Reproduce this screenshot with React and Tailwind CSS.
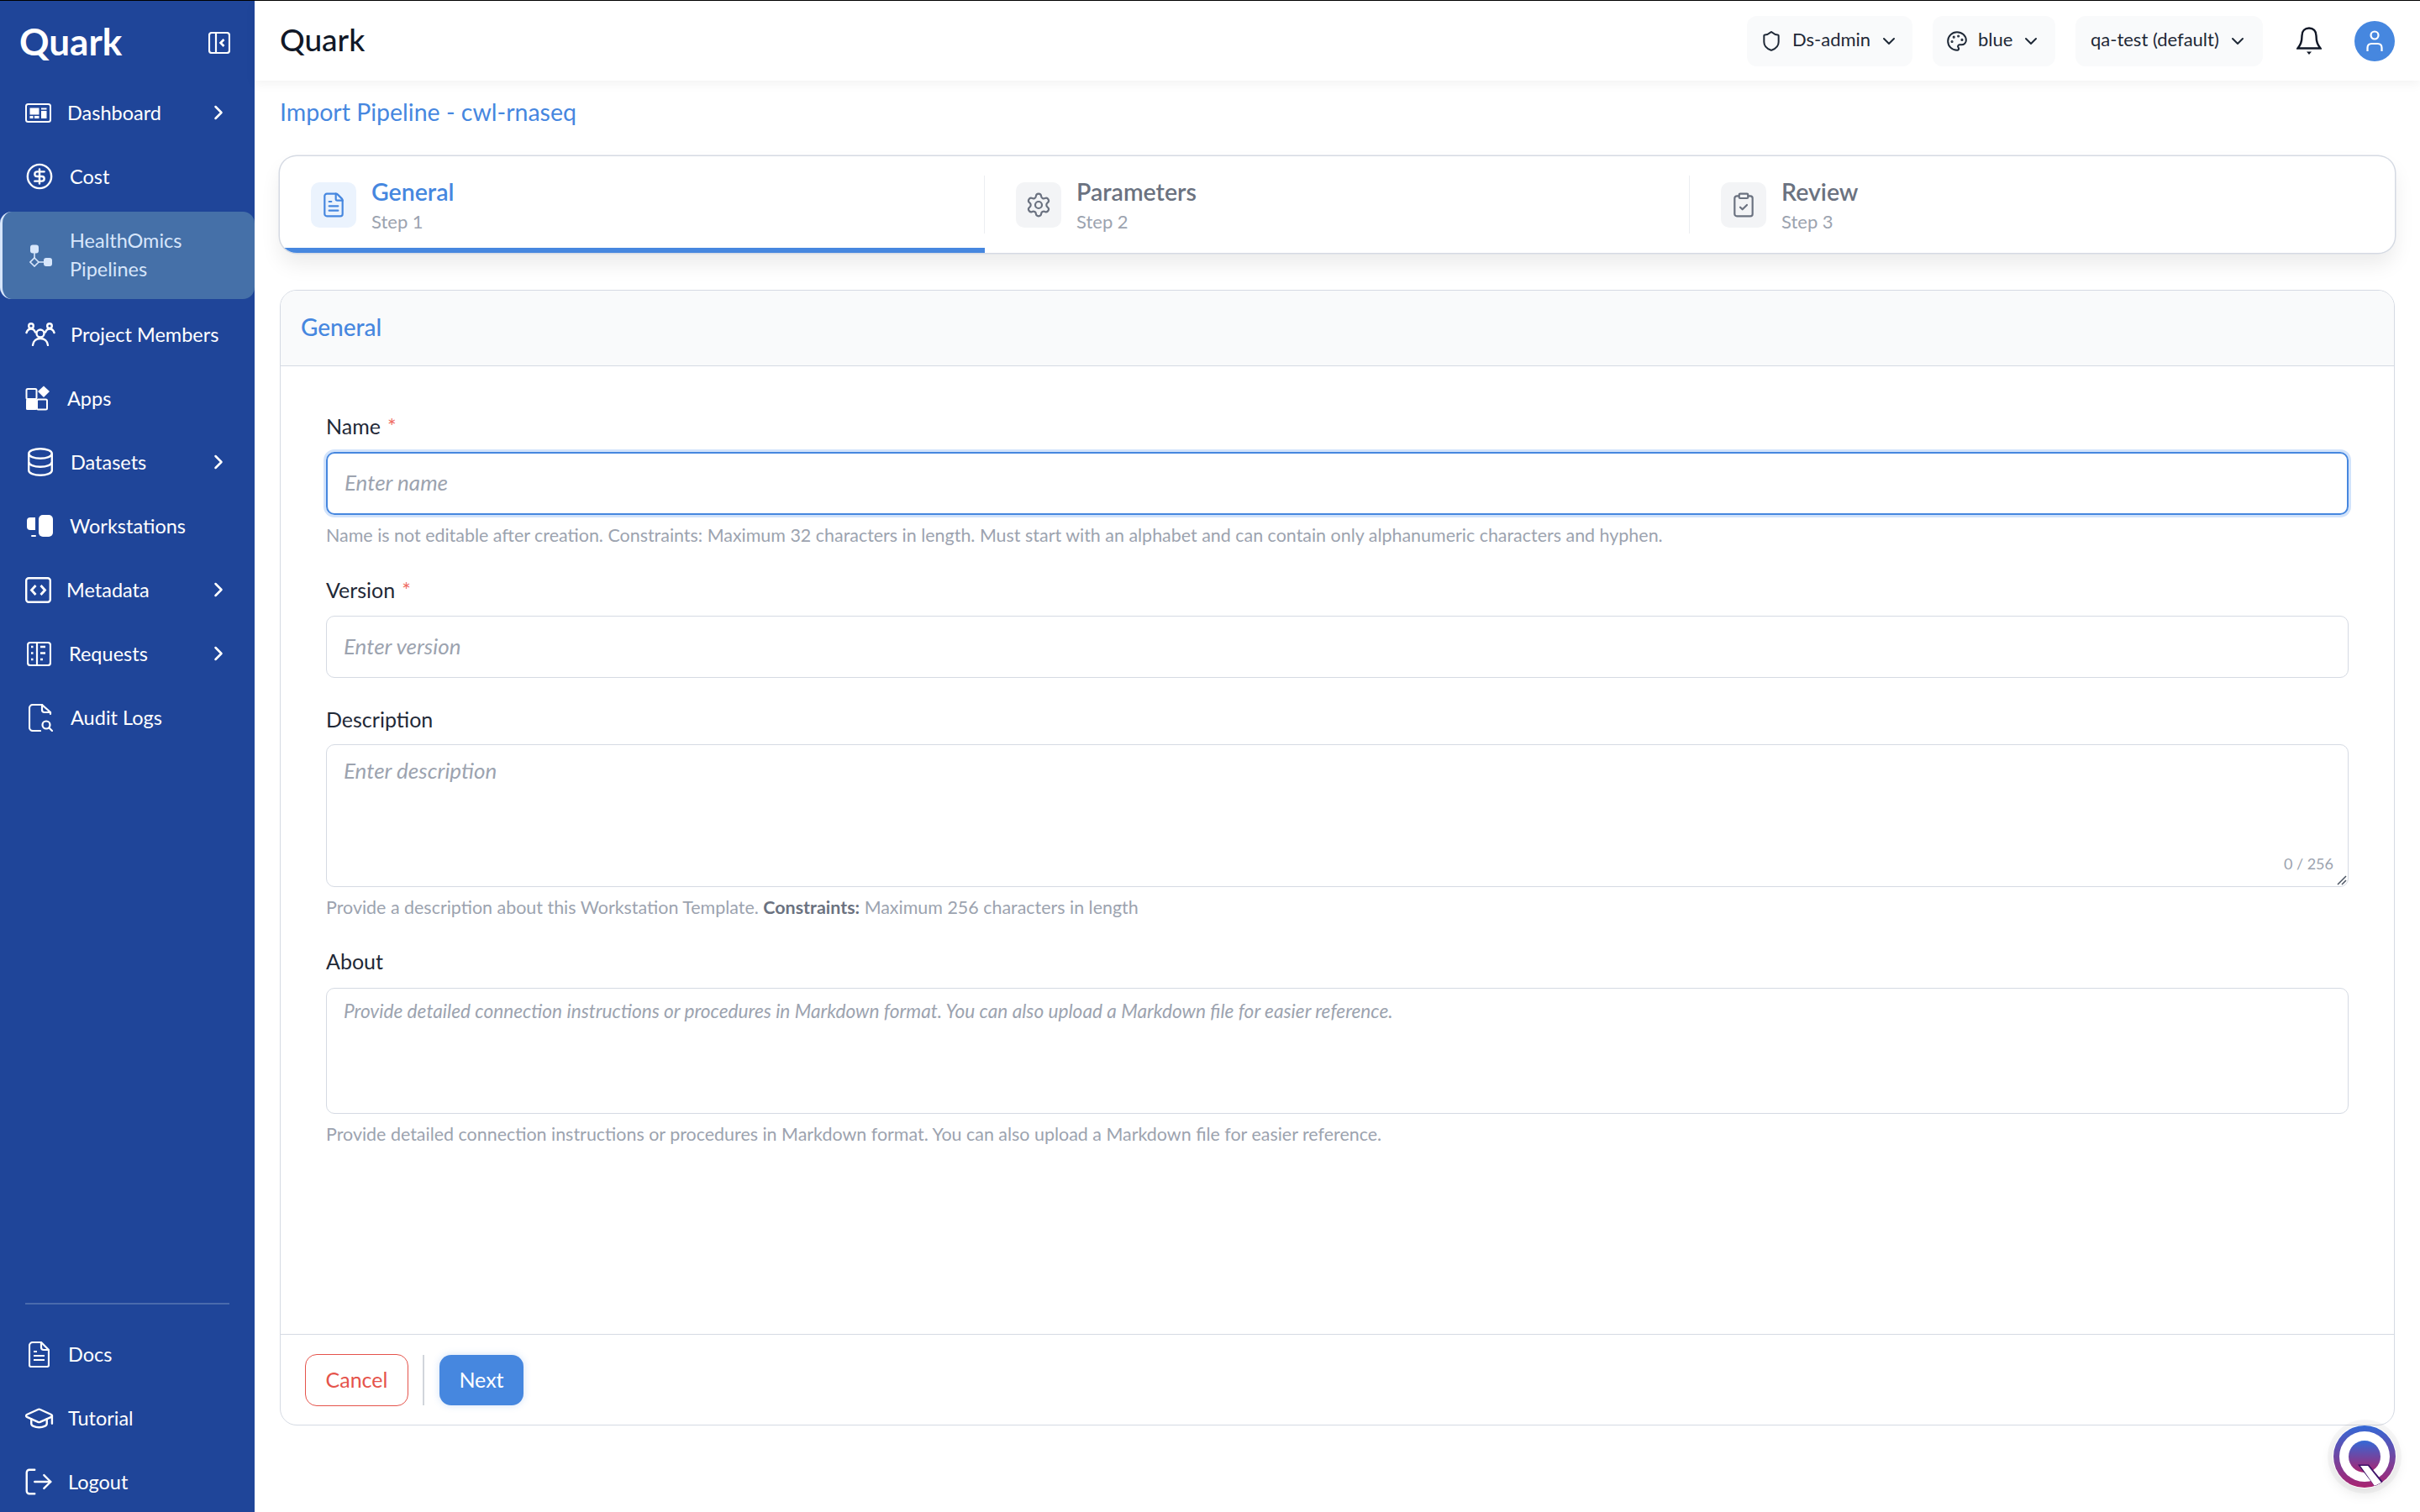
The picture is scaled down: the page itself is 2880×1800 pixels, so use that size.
import {
  ChevronDown,
  ChevronRight,
  CircleDollarSign,
  ClipboardCheck,
  FileText,
  GraduationCap,
  LogOut,
  Palette,
  Settings,
  Shield,
} from "lucide-react";

const DashboardIcon = () => (
  <svg width="31" height="23" viewBox="0 0 31 23" fill="none">
    <rect x="1" y="1" width="29" height="21" rx="2.5" stroke="currentColor" strokeWidth="2" />
    <rect x="5.5" y="5.5" width="11" height="8" fill="currentColor" />
    <rect x="5.5" y="15" width="4" height="3" fill="currentColor" />
    <rect x="11" y="15" width="5.5" height="3" fill="currentColor" />
    <rect x="19" y="5.5" width="6.5" height="2" fill="currentColor" />
    <rect x="19" y="9" width="6.5" height="9" fill="currentColor" />
  </svg>
);

const PipelineIcon = () => (
  <svg width="27" height="27" viewBox="0 0 27 27" fill="none" stroke="currentColor" strokeWidth="1.6">
    <rect x="1" y="0.5" width="10" height="10" rx="3" fill="currentColor" stroke="none" />
    <rect x="17" y="16" width="10" height="10" rx="3" fill="currentColor" stroke="none" />
    <path d="M6 10v6M11 21h6" />
    <path d="M6 16l5 5-5 5-5-5z" />
  </svg>
);

const MembersIcon = () => (
  <svg width="36" height="28" viewBox="0 0 36 28" fill="none" stroke="currentColor" strokeWidth="2.400" strokeLinecap="round">
    <circle cx="7" cy="4" r="2.800" />
    <circle cx="29" cy="4" r="2.800" />
    <circle cx="18" cy="13" r="4.500" />
    <path d="M1.500 12c1-3 3-4.500 5.500-4.500 2 0 4 1.500 5 4M34.500 12c-1-3-3-4.500-5.500-4.500-2 0-4 1.500-5 4" />
    <path d="M9 27c.5-5 4-8 9-8s8.500 3 9 8" />
  </svg>
);

const AppsIcon = () => (
  <svg width="30" height="30" viewBox="0 0 30 30" fill="none">
    <rect x="1.500" y="4" width="12" height="12" rx="1.500" stroke="currentColor" strokeWidth="2" />
    <rect x="1" y="16" width="13" height="13" rx="1.500" fill="currentColor" />
    <rect x="14" y="16.500" width="12" height="12" rx="1.500" stroke="currentColor" strokeWidth="2" />
    <path d="M22 0.500l7 6.500-7 7-7-7z" fill="currentColor" />
  </svg>
);

const DatabaseIcon = () => (
  <svg width="30" height="34" viewBox="0 0 30 34" fill="none" stroke="currentColor" strokeWidth="2.400">
    <ellipse cx="15" cy="7" rx="13.800" ry="5.800" />
    <path d="M1.200 7v20c0 3.300 6.200 5.800 13.800 5.800s13.800-2.500 13.800-5.800V7" />
    <path d="M1.200 17c0 3.300 6.200 5.800 13.800 5.800s13.800-2.500 13.800-5.800" />
  </svg>
);

const WorkstationIcon = () => (
  <svg width="32" height="26" viewBox="0 0 32 26" fill="currentColor">
    <rect x="15" y="0" width="17" height="26" rx="5" />
    <path d="M5 3h6v15H5a4 4 0 0 1-4-4V7a4 4 0 0 1 4-4z" />
    <rect x="6" y="24" width="6" height="2" rx="1" />
  </svg>
);

const MetadataIcon = () => (
  <svg width="31" height="31" viewBox="0 0 31 31" fill="none" stroke="currentColor" strokeWidth="2.800">
    <rect x="1.200" y="1.200" width="28.600" height="28.600" rx="3" strokeWidth="2.400" />
    <path d="M12.500 10l-5 5.500 5 5.500M18.500 10l5 5.500-5 5.500" />
  </svg>
);

const RequestsIcon = () => (
  <svg width="29" height="29" viewBox="0 0 29 29" fill="none" stroke="currentColor" strokeWidth="2.200">
    <rect x="1" y="1" width="27" height="27" rx="3" />
    <path d="M12 1v27" />
    <path d="M5 6h2.500M5 13.500h2.500M5 21h2.500M16 6h6M16 13.500h6M16 21h3" strokeWidth="2.400" />
  </svg>
);

const AuditIcon = () => (
  <svg width="29" height="33" viewBox="0 0 29 33" fill="none" stroke="currentColor" strokeWidth="2.200" strokeLinecap="round">
    <path d="M16 1H5a4 4 0 0 0-4 4v23a4 4 0 0 0 4 4h9" />
    <path d="M16 1l10 9v2M16 1v6a3 3 0 0 0 3 3h7" />
    <circle cx="21" cy="25" r="4.500" />
    <path d="M24.500 28.500l3.500 3.500" />
  </svg>
);

const DocsIcon = () => (
  <svg width="25" height="31" viewBox="0 0 25 31" fill="none" stroke="currentColor" strokeWidth="2.200">
    <path d="M15 1H5a4 4 0 0 0-4 4v23a2 2 0 0 0 2 2h19a2 2 0 0 0 2-2V10z" />
    <path d="M15 1v6a3 3 0 0 0 3 3h6" />
    <path d="M6 12h4M6 17h13M6 22h13" strokeWidth="2.200" />
  </svg>
);

const QuarkFab = () => (
  <svg width="76" height="76" viewBox="0 0 76 76">
    <defs>
      <linearGradient id="fabGrad" x1="0" y1="0" x2="0" y2="1">
        <stop offset="0" stopColor="#3469d6" />
        <stop offset="1" stopColor="#aa2470" />
      </linearGradient>
      <clipPath id="fabClip">
        <circle cx="38" cy="38" r="37" />
      </clipPath>
    </defs>
    <circle cx="38" cy="38" r="37" fill="url(#fabGrad)" />
    <circle cx="38" cy="38" r="30" fill="#fff" />
    <circle cx="38" cy="38" r="19" fill="url(#fabGrad)" />
    <g clipPath="url(#fabClip)">
      <path d="M30 47.500h13l18 22-10 5z" fill="#3d1068" />
      <path d="M33 49h9l16 20-8 4z" fill="#fff" />
    </g>
  </svg>
);

const navItems = [
  { label: "Dashboard", icon: <DashboardIcon />, row: "pl-[30px] gap-[19px]", arrow: true },
  {
    label: "Cost",
    icon: <CircleDollarSign size={34} absoluteStrokeWidth strokeWidth={2.400} />,
    row: "pl-[30px] gap-[19px]",
  },
  { label: "HealthOmics Pipelines", icon: <PipelineIcon />, row: "pl-[32px] gap-[21px]", active: true },
  { label: "Project Members", icon: <MembersIcon />, row: "pl-[30px] gap-[18px]" },
  { label: "Apps", icon: <AppsIcon />, row: "pl-[30px] gap-[20px]" },
  { label: "Datasets", icon: <DatabaseIcon />, row: "pl-[33px] gap-[21px]", arrow: true },
  { label: "Workstations", icon: <WorkstationIcon />, row: "pl-[31px] gap-[20px]" },
  { label: "Metadata", icon: <MetadataIcon />, row: "pl-[30px] gap-[18px]", arrow: true },
  { label: "Requests", icon: <RequestsIcon />, row: "pl-[32px] gap-[21px]", arrow: true },
  { label: "Audit Logs", icon: <AuditIcon />, row: "pl-[34px] gap-[21px]" },
];

const bottomItems = [
  { label: "Docs", icon: <DocsIcon />, row: "pl-[34px] gap-[22px]" },
  {
    label: "Tutorial",
    icon: <GraduationCap size={37} absoluteStrokeWidth strokeWidth={2.400} />,
    row: "pl-[28px] gap-[16px]",
  },
  {
    label: "Logout",
    icon: <LogOut size={38} absoluteStrokeWidth strokeWidth={2.400} />,
    row: "pl-[27px] gap-[16px]",
  },
];

function NavRow({ item }) {
  if (item.active) {
    return (
      <div
        className={`flex items-center h-[104px] rounded-[14px] border-l-[3px] border-[#d7e6fb] bg-[#4570a8] text-[#d7e6fb] ${item.row}`}
      >
        {item.icon}
        <span className="w-[150px] pb-[2px] text-[23.500px] leading-[34px]">{item.label}</span>
      </div>
    );
  }
  return (
    <div className={`flex items-center h-[68px] text-white ${item.row}`}>
      {item.icon}
      <span className="pt-[2px] text-[23.500px]">{item.label}</span>
      {item.arrow && (
        <ChevronRight className="ml-auto mr-[29px]" size={28} absoluteStrokeWidth strokeWidth={2.500} />
      )}
    </div>
  );
}

function Sidebar() {
  return (
    <aside className="flex flex-col w-[303px] shrink-0 bg-[#1f4599]">
      <div className="flex items-center justify-between h-[99px] pl-[23px] pr-[29px]">
        <span className="pb-[4px] text-[44px] font-bold text-white leading-none">Quark</span>
        <svg width="26" height="26" viewBox="0 0 26 26" fill="none" stroke="#fff" strokeWidth="2.200">
          <rect x="1" y="1" width="24" height="24" rx="3" />
          <path d="M9 1v24" />
          <path d="M18.500 9l-4 4 4 4" strokeWidth="2.600" />
        </svg>
      </div>
      <nav className="flex flex-col gap-[8px]">
        {navItems.map((item) => (
          <NavRow key={item.label} item={item} />
        ))}
      </nav>
      <div className="mt-auto mx-[30px] h-[2px] bg-[#4a6bac]" />
      <div className="flex flex-col gap-[8px] mt-[25px] pb-[2px]">
        {bottomItems.map((item) => (
          <NavRow key={item.label} item={item} />
        ))}
      </div>
    </aside>
  );
}

function Dropdown({ icon, label, className }) {
  return (
    <div className={`flex items-center h-[60px] rounded-[12px] bg-[#f9fafb] text-[#1f2937] ${className}`}>
      {icon}
      <span className="pb-[4px] text-[22px]">{label}</span>
      <ChevronDown className="-ml-[2px]" size={24} absoluteStrokeWidth strokeWidth={2} />
    </div>
  );
}

function Header() {
  return (
    <header className="flex items-center h-[95px] shrink-0 pl-[30px] pr-[30px] bg-white shadow-[0_4px_12px_rgba(0,0,0,0.05)]">
      <span className="pb-[4px] text-[37px] font-medium text-[#111827]">Quark</span>
      <div className="flex items-center gap-[24px] ml-auto">
        <Dropdown
          className="w-[197px] pl-[16px] gap-[12px]"
          icon={<Shield size={26} absoluteStrokeWidth strokeWidth={2} />}
          label="Ds-admin"
        />
        <Dropdown
          className="w-[146px] pl-[16px] gap-[12px]"
          icon={<Palette size={26} absoluteStrokeWidth strokeWidth={2} />}
          label="blue"
        />
        <Dropdown className="w-[223px] pl-[18px] gap-[12px]" label="qa-test (default)" />
      </div>
      <svg className="ml-[40px]" width="30" height="34" viewBox="0 0 30 34" fill="none" stroke="#111827" strokeWidth="2.400">
        <path d="M15 1.500c-5 0-8.500 3.500-8.500 9 0 8-2 11-5 15h27c-3-4-5-7-5-15 0-5.500-3.500-9-8.500-9z" />
        <path d="M12 29.500h6l-3 3.500z" fill="#111827" stroke="none" />
      </svg>
      <div className="flex items-center justify-center w-[48px] h-[48px] ml-[39px] rounded-full bg-[#4687df]">
        <svg width="22" height="26" viewBox="0 0 22 26" fill="none" stroke="#fff" strokeWidth="2.200">
          <circle cx="11" cy="6" r="4.500" />
          <path d="M2.500 25v-4c0-3 2-5 5-5h7c3 0 5 2 5 5v4" />
        </svg>
      </div>
    </header>
  );
}

const steps = [
  { title: "General", sub: "Step 1", icon: FileText, active: true },
  { title: "Parameters", sub: "Step 2", icon: Settings },
  { title: "Review", sub: "Step 3", icon: ClipboardCheck, last: true },
];

function Stepper() {
  return (
    <div className="flex h-[115px] mt-[38px] shrink-0 rounded-[20px] overflow-hidden bg-white shadow-[0_0_0_1.500px_#d5dae3,0_14px_24px_rgba(0,0,0,0.08)]">
      {steps.map((step) => {
        const Icon = step.icon;
        return (
          <div
            key={step.title}
            className={`flex-1 pt-[23px] border-b-[6px] ${step.active ? "border-[#4687df]" : "border-transparent"}`}
          >
            <div className={`flex h-[69px] pl-[37px] ${step.last ? "" : "border-r-[1.500px] border-[#eceef1]"}`}>
              <div
                className={`flex items-center justify-center w-[54px] h-[54px] mt-[8px] rounded-[10px] ${
                  step.active ? "bg-[#ebf3fd] text-[#4687df]" : "bg-[#f3f4f6] text-[#6b7280]"
                }`}
              >
                <Icon size={32} absoluteStrokeWidth strokeWidth={2.200} />
              </div>
              <div className="ml-[18px] -mt-[1px]">
                <div
                  className={`text-[28.500px] font-semibold leading-[40px] ${
                    step.active ? "text-[#4687df]" : "text-[#6b7280]"
                  }`}
                >
                  {step.title}
                </div>
                <div className="mt-[1px] text-[22px] leading-[30px] text-[#9ca3af]">{step.sub}</div>
              </div>
            </div>
          </div>
        );
      })}
    </div>
  );
}

const Label = ({ children, required, className }) => (
  <label className={`block text-[25px] leading-[30px] text-[#1f2937] ${className}`}>
    {children}
    {required && <span className="ml-[8px] text-[#ef6b63]">*</span>}
  </label>
);

const Help = ({ children }) => (
  <p className="mt-[9px] text-[21.450px] leading-[30px] text-[#9ca3af]">{children}</p>
);

function GeneralForm() {
  return (
    <div className="flex flex-col flex-1 mt-[44px] rounded-[20px] border-[1.500px] border-[#d5dae3] overflow-hidden">
      <div className="flex items-center h-[90px] shrink-0 pl-[24px] pb-[3px] border-b-[1.500px] border-[#d5dae3] bg-[#f9fafb]">
        <span className="text-[28px] font-medium text-[#4687df]">General</span>
      </div>
      <div className="flex-1 px-[54px] pt-[56px]">
        <Label required className="mb-[16px]">Name</Label>
        <input
          placeholder="Enter name"
          className="block w-full h-[75px] px-[20px] pb-[3px] rounded-[10px] border-2 border-[#4687df] shadow-[0_0_0_3px_#d2e3fb] text-[26px] outline-none placeholder:italic placeholder:text-[#9ca3af]"
        />
        <Help>
          Name is not editable after creation. Constraints: Maximum 32 characters in length. Must start with an
          alphabet and can contain only alphanumeric characters and hyphen.
        </Help>
        <Label required className="mt-[35px] mb-[16px]">Version</Label>
        <input
          placeholder="Enter version"
          className="block w-full h-[74px] px-[20px] pb-[3px] rounded-[10px] border-[1.500px] border-[#d5dae3] text-[26px] outline-none placeholder:italic placeholder:text-[#9ca3af]"
        />
        <Label className="mt-[34px] mb-[15px]">Description</Label>
        <div className="relative">
          <textarea
            placeholder="Enter description"
            className="block w-full h-[170px] px-[20px] py-[11px] rounded-[10px] border-[1.500px] border-[#d5dae3] text-[26px] outline-none resize-none placeholder:italic placeholder:text-[#9ca3af]"
          />
          <span className="absolute right-[18px] bottom-[14px] text-[18px] text-[#9ca3af]">0 / 256</span>
          <svg className="absolute right-[1px] bottom-[1px]" width="14" height="14" viewBox="0 0 14 14" stroke="#4b5563" strokeWidth="1.500">
            <path d="M2 12L12 2M7 12l5-5" />
          </svg>
        </div>
        <Help>
          Provide a description about this Workstation Template. <b className="font-bold text-[#6b7280]">Constraints:</b>{" "}
          Maximum 256 characters in length
        </Help>
        <Label className="mt-[34px] mb-[17px]">About</Label>
        <textarea
          placeholder="Provide detailed connection instructions or procedures in Markdown format. You can also upload a Markdown file for easier reference."
          className="block w-full h-[150px] px-[20px] py-[10px] rounded-[10px] border-[1.500px] border-[#d5dae3] text-[22.700px] outline-none resize-none placeholder:italic placeholder:text-[#9ca3af]"
        />
        <Help>
          Provide detailed connection instructions or procedures in Markdown format. You can also upload a Markdown
          file for easier reference.
        </Help>
      </div>
      <div className="flex items-center h-[108px] shrink-0 pl-[29px] border-t-[1.500px] border-[#d5dae3]">
        <button className="w-[123px] h-[62px] rounded-[14px] border-[1.500px] border-[#e5534b] text-[25px] text-[#e5534b]">
          Cancel
        </button>
        <div className="w-[2px] h-[60px] ml-[17px] mr-[18px] bg-[#d1d5db]" />
        <button className="w-[100px] h-[60px] rounded-[14px] bg-[#4687df] text-[25px] text-white shadow-[0_0_8px_rgba(70,135,223,0.25)]">
          Next
        </button>
      </div>
    </div>
  );
}

export default function App() {
  return (
    <div className="relative flex flex-col h-screen bg-white font-['Lato',sans-serif] overflow-hidden">
      <div className="h-px shrink-0 bg-black" />
      <div className="flex flex-1 min-h-0">
        <Sidebar />
        <main className="flex flex-col flex-1 min-w-0">
          <Header />
          <div className="flex flex-col flex-1 min-h-0 px-[30px] pt-[22px] pb-[103px]">
            <h1 className="text-[28.500px] leading-[30px] text-[#4687df]">Import Pipeline - cwl-rnaseq</h1>
            <Stepper />
            <GeneralForm />
          </div>
        </main>
      </div>
      {/* help launcher */}
      <div className="absolute right-[28px] bottom-[28px] w-[76px] h-[76px] rounded-full shadow-[0_0_0_6px_rgba(0,0,0,0.03),0_6px_16px_rgba(0,0,0,0.1)]">
        <QuarkFab />
      </div>
    </div>
  );
}
